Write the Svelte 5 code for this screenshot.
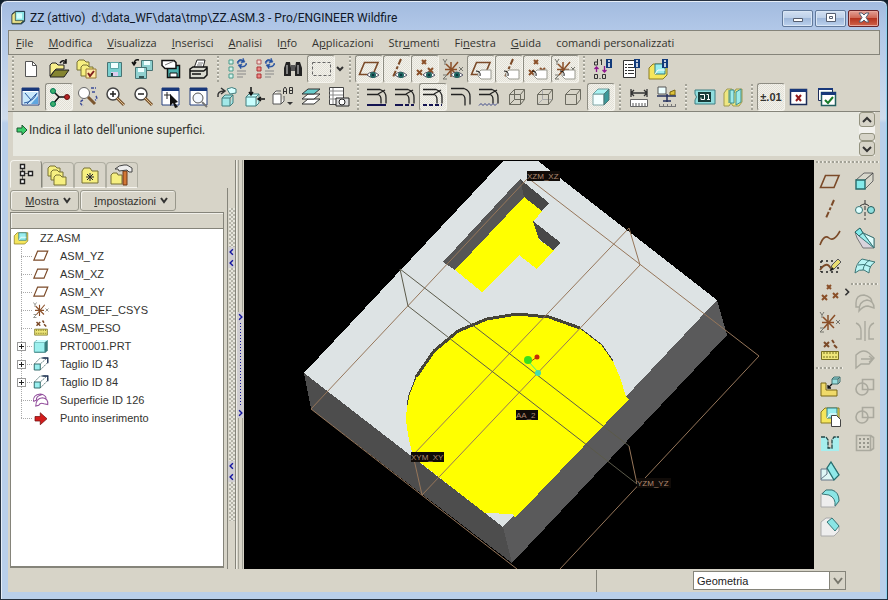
<script>
  // shared icon pieces, all on a 24x24 grid
  const eye = '<path d="M10 18q5-6 12 0q-6 5-12 0z" fill="#fff" stroke="#556" /><circle cx="16" cy="18" r="3" fill="#1f6660"/><path d="M16 17v2" stroke="#002"/>';
  const tag = '<path d="M12 13h10v9H12l-3-3v-3z" fill="#fff" stroke="#99998f"/><path d="M7 14q5 0 4 5" fill="none" stroke="#111"/>';
  const plane = '<path d="M7.500 5.500H21L16 17.500H2.500z" fill="none" stroke="#7b4a28" stroke-width="1.600"/>';
  const axis = '<path d="M16 2L8 20" stroke="#7b4a28" stroke-width="2" stroke-dasharray="6 2 3 2"/>';
  const points = '<path d="M9 3l4 4m0-4l-4 4M4 13l5 5m0-5l-5 5M15 11l5 5m0-5l-5 5" stroke="#8a4f28" stroke-width="2"/>';
  const csys = '<path d="M2 2l2 3l2-3M4 5v3M18 10l4 4m0-4l-4 4M2 18h4l-4 4h4" fill="none" stroke="#74746c"/><path d="M10 5v15M5 7l11 11M17 5L6 18M4 12.500h12" stroke="#8a4f28" stroke-width="1.500"/>';
  const info = '<path d="M15 2h6v9h-6z" fill="#123a7a"/><path d="M18 3v2M18 6v4" stroke="#fff" stroke-width="1.500"/>';
  const magnifier = '<circle cx="10" cy="9" r="6" fill="#fff" stroke="#444" stroke-width="1.500"/><path d="M14 13l7 7" stroke="#7b5630" stroke-width="3"/><path d="M14 13l7 7" stroke="#e0c090"/>';
  const cube = '<path d="M4 9h11v11H4z" fill="#f4ffff" stroke="#7fa5a5"/><path d="M4 9l5-5h11l-5 5z" fill="#a9f3f3" stroke="#6f9c9c"/><path d="M15 9l5-5v11l-5 5z" fill="#3a9a9a" stroke="#4f7777"/>';
  const edges = '<path d="M2 4.500h13q6 2 6 8v6M2 9.500h11q3 1 3 5v4M13 9l7-4" fill="none" stroke="#222" stroke-width="1.300"/>';
  const part = '<path d="M3 9l4-4h14v11l-4 4H3z" fill="#f5e65c" stroke="#8b7d23"/><path d="M9 5h10v10H9z" fill="#99eeee" stroke="#337b80"/><path d="M9 15l3-4h7" fill="none" stroke="#fff"/>';
  const folder = '<path d="M2 5l2-2h5l2 2h3v8H2z" fill="#f6ef80" stroke="#777135"/>';
  const disk = '<path d="M4.500 5.500h14v14h-14z" fill="#79cfcf" stroke="#487373"/><path d="M7.500 5.500h8v6h-8z" fill="#f1ffff" stroke="#5aa5a5"/><path d="M8 15h7v4H8z" fill="#dce"/><path d="M9 16v3" stroke="#244" stroke-width="2"/>';
  const refresh = '<path d="M12 5q2-4 6-2v-2l2 4-4 1 1-2q-3-1-4 3zM22 7q-2 4-6 3v2l-3-4 4-1-1 2q4 1 5-3z" fill="#2450a0" stroke="#2450a0" stroke-width=".5"/>';
  const frame = '<path d="M3 3h17v17H3z" fill="#fff" stroke="#26417e"/><path d="M3 3h17v3H3z" fill="#18387a"/>';
  const smallCut = '<path d="M3 12h8v8H3z" fill="#9aefef" stroke="#2f6969" stroke-width="1.300"/>';

  const icons = {
    app: '<path d="M3 6l5-4h14v15l-5 4H3z" fill="#244e56" stroke="#123"/><path d="M8 3h13v13H8z" fill="#8de4e4"/><path d="M3 7l5-4v13h12l-4 4H3z" fill="#ece48c" stroke="#3f4a30"/><path d="M10 5h8v8h-8z" fill="#d4ffff"/>',
    newFile: '<path d="M6.500 4.500h7l4 4v11h-11z" fill="#fff" stroke="#555"/><path d="M13.500 4.500v4h4" fill="none" stroke="#555"/>',
    open: '<path d="M3 19V8l2-2h4l2 2h6v4H9z" fill="#f8ef8c" stroke="#222"/><path d="M3 20l5-7h14l-5 7z" fill="#858530" stroke="#222"/><path d="M13 6q3-4 6-1m0-3v4h-3" fill="none" stroke="#111" stroke-width="1.500"/>',
    workDir: folder + '<path d="M6 10l2-2h4l2 2h4v9H6z" fill="#f6ef80" stroke="#777135"/><path d="M11 12h10v9H11z" fill="#ffe9a5" stroke="#967831"/><path d="M13 16l2 3l4-5" fill="none" stroke="#802020" stroke-width="2"/>',
    save: disk,
    saveCopy: '<path d="M10.500 3.500h11v10h-11z" fill="#8fd0cf" stroke="#487373"/><path d="M13 4h6v4h-6z" fill="#eff"/><path d="M4.500 10.500h11v11h-11z" fill="#8fd0cf" stroke="#487373"/><path d="M7 11h6v4H7z" fill="#eff"/><path d="M8 19h5v2H8z" fill="#355"/><path d="M8 3q-5-1-5 4m-2-2l2 3 2-3" fill="none" stroke="#111" stroke-width="1.500"/>',
    backup: '<path d="M8.500 8.500h12v12h-12z" fill="#4fb3b0" stroke="#111" stroke-width="1.500"/><path d="M11 16h7v4h-7z" fill="#fff" stroke="#111"/><path d="M3 3.500h12l2 2v6H6l-3-3z" fill="#fff" stroke="#111" stroke-width="1.500"/><path d="M6 8l9-4" stroke="#777"/>',
    print: '<path d="M7 11l3-8h8l-2 8" fill="#fff" stroke="#222"/><path d="M11 6h5M10 8h5" stroke="#777"/><path d="M3 12l3-2h14v8l-3 3H3z" fill="#d9d9cf" stroke="#111" stroke-width="1.500"/><path d="M3 14h14M17 14l3-3M5 17h9" stroke="#111" stroke-width="1.500"/>',
    regen: '<path d="M4 3h4v4H4zM4 10h4v4H4zM4 17h4v4H4z" fill="#d5f3ee" stroke="#4a9a8a"/><path d="M12 14h9M12 17h9M12 20h6" stroke="#888"/>' + refresh,
    regenList: '<path d="M4 3h4v4H4z" fill="#f6d9d5" stroke="#b05a5a"/><path d="M4 10h4v4H4zM4 17h4v4H4z" fill="#e88" stroke="#a33"/><path d="M12 14h9M12 17h9M12 20h6" stroke="#888"/>' + refresh,
    find: '<path d="M5 5h4l1 6v8H3v-8zM15 5h4l2 6v8h-7v-8z" fill="#222"/><path d="M10 8h4v6h-4z" fill="#555"/><path d="M6 8v9M17 8v9" stroke="#ddd"/>',
    selectBox: '<path d="M3.500 5.500h18v13h-18z" fill="none" stroke="#666" stroke-dasharray="3 2"/>',
    planeOn: plane + eye,
    axisOn: axis + eye,
    pointsOn: points + eye,
    csysOn: csys + eye,
    planeTag: plane + tag,
    axisTag: axis + tag,
    pointsTag: points + tag,
    csysTag: csys + tag,
    dims: '<path d="M6.500 2v6H3.500V5h3M9 3.500l1.500-1V8" fill="none" stroke="#333"/><path d="M5.500 15v-5m-2 2l2-2 2 2M13.500 9v6m-2-2l2 2 2-2" fill="none" stroke="#90158f" stroke-width="1.300"/><path d="M3.500 17.500h3v4h-3zM11.500 17.500h3v4h-3z" fill="none" stroke="#333"/><path d="M8.500 21.500h1" stroke="#333"/>' + info,
    report: '<path d="M4.500 3.500h12v17h-12z" fill="#fff" stroke="#333"/><path d="M6 7.500h2M6 10.500h2M6 13.500h2M6 16.500h2M9 7.500h5M9 10.500h6M9 13.500h6M9 16.500h6" stroke="#333"/>' + info,
    partInfo: '<g transform="translate(-1 2)">' + part + '</g>' + info,
    repaint: frame + '<path d="M4 7h15v12H4z" fill="#c9e8fb"/><path d="M5 18q9-1 13-10M6 8l6 7m-4 4l9-10" fill="none" stroke="#2859a0"/><path d="M12 19h7v-8z" fill="#5fa6df"/>',
    spin: '<path d="M6 6l6 6h8M12 12l-6 7" fill="none" stroke="#111" stroke-width="1.500"/><circle cx="6" cy="6" r="2.500" fill="#3cb06c" stroke="#075"/><circle cx="6" cy="19" r="2.500" fill="#3cb06c" stroke="#075"/><circle cx="20" cy="12" r="2.500" fill="#b72222" stroke="#611"/>',
    orientMode: '<circle cx="9" cy="8" r="5.500" fill="#fff" stroke="#666"/><path d="M13 12l7 7" stroke="#7b5630" stroke-width="3"/><path d="M16 3h5M17 7h4M8 15q-5 2 0 6M21 11q2 3-1 4" fill="none" stroke="#3c4c98" stroke-width="1.500" stroke-dasharray="3 1"/>',
    zoomIn: magnifier + '<path d="M7 9h6M10 6v6" stroke="#222" stroke-width="1.500"/>',
    zoomOut: magnifier + '<path d="M7 9h6" stroke="#222" stroke-width="1.500"/>',
    refit: frame + '<path d="M8 7v7M5 10h7" stroke="#222"/><path d="M11 9l8 8-3 1 3 4-3 1-2-5-3 3z" fill="#111"/>',
    reorient: frame + '<circle cx="11" cy="13" r="5" fill="#f4f8ff" stroke="#555"/><path d="M15 17l5 5" stroke="#777" stroke-width="2"/>',
    viewList: '<path d="M3 12q-1-6 6-6m-3-3l4 3-4 3" fill="none" stroke="#333" stroke-width="1.500"/><path d="M7 13h8v8H7zM7 13l3-3h8l-3 3M15 21l3-3v-8" fill="#a2e8e8" stroke="#417c7c"/><path d="M12 4q5-3 9 0v4l-6 1z" fill="#d9ffff" stroke="#417c7c"/>',
    saved: '<path d="M3 12h10v9H3zM3 12l3-3h10l-3 3M13 21l3-3V9" fill="#c8ffff" stroke="#417c7c"/><path d="M8 2v7m-2-2l2 3 2-3M22 14h-6m2-2l-3 2 3 2" fill="none" stroke="#111" stroke-width="1.500"/>',
    named: '<path d="M2 9h8v10H2zM2 9l3-3h5M10 19l3-3v-5" fill="#fff" stroke="#555"/><path d="M12.500 9V4l1.500-2 1.500 2v5M12.500 6.500h3M18.500 2.500v6h3v-6h-3M18.500 5.500h3" fill="none" stroke="#333"/><path d="M16 17h6l-3 3z" fill="#333"/>',
    layers: '<path d="M3 19l6-5h12l-6 5z" fill="#fff" stroke="#333"/><path d="M3 14l6-5h12l-6 5z" fill="#fff" stroke="#333"/><path d="M3 9l6-5h12l-6 5z" fill="#68cccc" stroke="#333"/>',
    viewManager: '<path d="M2.500 2.500h14v17h-14z" fill="#fff" stroke="#444"/><path d="M2 6h14M2 10h14M2 14h14M6 3v16" stroke="#888"/><path d="M9 13h13v8H9z" fill="#ddd" stroke="#222"/><circle cx="15" cy="17" r="3" fill="#fff" stroke="#222"/>',
    edge1: edges + '<path d="M2 20h19" stroke="#141452" stroke-width="2"/>',
    edge2: edges + '<path d="M2 20h19" stroke="#141452" stroke-width="2" stroke-dasharray="8 2 4 2"/>',
    edge3: edges + '<path d="M2 20h19" stroke="#141452" stroke-width="2" stroke-dasharray="4 2"/>',
    edge4: '<path d="M2 3.500h13q6 2 6 8v8M2 9.500h11q3 1 3 5v6" fill="none" stroke="#222" stroke-width="1.300"/>',
    edge5: edges + '<path d="M2 20.500l2-2 2 2 2-2 2 2 2-2 2 2 2-2 2 2 2-2" fill="none" stroke="#3a4488"/>',
    wire: '<path d="M4.500 9.500h11v10h-11zM9.500 4.500h10v10h-10zM4.500 9.500l5-5M15.500 9.500l4-5M15.500 19.500l4-5M4.500 19.500l5-5" fill="none" stroke="#6c6b60"/>',
    hidden: '<path d="M9.500 4.500v10h10M4.500 19.500l5-5" fill="none" stroke="#aaa" /><path d="M4.500 9.500h11v10h-11zM4.500 9.500l5-5h10v10l-4 5M15.500 9.500l4-5" fill="none" stroke="#6c6b60"/>',
    noHidden: '<path d="M4.500 9.500h11v10h-11zM4.500 9.500l5-5h10v10l-4 5M15.500 9.500l4-5" fill="none" stroke="#6c6b60"/>',
    shaded: cube,
    distance: '<path d="M4 4v8M20 4v8M4 8h16M7 5L4 8l3 3M17 5l3 3-3 3" fill="none" stroke="#333" stroke-width="1.300"/><path d="M3.500 14.500h17v7h-17z" fill="#fff" stroke="#666"/><path d="M6 21v-3M9 21v-3M12 21v-3M15 21v-3M18 21v-3" stroke="#555"/>',
    mass: '<path d="M3 2h8v7H3z" fill="#eff" stroke="#555"/><path d="M15 7l5-2v5h-5z" fill="#ddc23a" stroke="#776410"/><path d="M2 11h19M12 9v8M8 16h8" stroke="#26315e" stroke-width="1.500"/><path d="M4.500 19v3M8.500 19v3M12.500 19v3M16.500 19v3M20.500 19v3M4 21.500h17" stroke="#777"/>',
    j1: '<path d="M2 5h20v14H2v-4q3-3 0-6z" fill="#91dede" stroke="#3f7f83"/><path d="M5 7h13v10H5z" fill="#173b39"/><path d="M7 9.500h4.500v5H8v-2M14 14.500h3M15.500 14.500v-5h-2" fill="none" stroke="#fff"/>',
    interfere: '<path d="M3 8l3-4h5l2 4 2-4h6v13l-3 4h-6l-2-3-2 3H3z" fill="#eee680" stroke="#a09a50"/><path d="M8 5v13M9 5h4v13H9zM15 7l5-3v13l-5 3z" fill="#9feaea" stroke="#3f8f8f"/>',
    closeWin: '<path d="M3.500 4.500h16v15h-16z" fill="#fff" stroke="#1c2c5a" stroke-width="1.500"/><path d="M3 4h17v3H3z" fill="#18387a"/><path d="M9 10l5 6m0-6l-5 6" stroke="#931b1b" stroke-width="2"/>',
    activeWin: '<path d="M3.500 3.500h14v12h-14z" fill="#fff" stroke="#1c2c5a"/><path d="M3 3h15v2H3z" fill="#18387a"/><path d="M6.500 7.500h14v13h-14z" fill="#fff" stroke="#226060" stroke-width="1.500"/><path d="M6 7h15v3H6z" fill="#18387a"/><path d="M10 15l3 3 5-6" fill="none" stroke="#187b28" stroke-width="2"/>',
    plane,
    axis,
    points,
    csys,
    part,
    treeTab: '<path d="M6.500 2.500h4v4h-4zM6.500 9.500h4v4h-4zM6.500 17.500h4v4h-4zM14.500 9.500h4v4h-4z" fill="#fff" stroke="#222" stroke-width="1.400"/><path d="M8.500 7v2M8.500 14v3M11 11.500h3" stroke="#555"/>',
    folders: folder + '<path d="M5 9l2-2h4l2 2h4v8H5z" fill="#f6ef80" stroke="#777135"/><path d="M8 14l2-2h4l2 2h4v8H8z" fill="#f6ef80" stroke="#777135"/>',
    favorites: '<path d="M4 8l2-3h6l2 3h6v12H4z" fill="#f6ef80" stroke="#777135"/><path d="M12 10v8M8 14h8M9 11l6 6M15 11l-6 6" stroke="#223"/>',
    hammer: '<path d="M1 12l2-2h4l1 2h4v9H1z" fill="#f6ef80" stroke="#777135"/><path d="M13 8h4v14h-4z" fill="#d27735" stroke="#713915"/><path d="M5 6q4-4 9-4h3l5 3v4h-3l-2-2-8 1-1-2z" fill="#eee" stroke="#444"/>',
    ruler: '<path d="M3.500 13.500h17v8h-17z" fill="#eee678" stroke="#777021"/><path d="M6 14v3M9 14v3M12 14v3M15 14v3M18 14v3M5 19h14" stroke="#777021" stroke-dasharray="2 1"/><path d="M6 4l5 5m0-5l-5 5" stroke="#7b4a28" stroke-width="2"/><path d="M14 2l2 3M16 7l3 3" stroke="#7b4a28" stroke-width="2"/>',
    solid: '<path d="M3 7l3-3h15v14l-3 3H3z" fill="#367b7b"/><path d="M3 7h14v13H3z" fill="#9cf0ee" stroke="#4b9999"/><path d="M3 7l4-3h14l-4 3z" fill="#c8ffff"/>',
    extrude: smallCut + '<path d="M3 12l8-8h10v6l-10 10M11 12l9-8" fill="none" stroke="#345b5b" stroke-dasharray="3 1"/><path d="M14 4h7v7" fill="none" stroke="#235" stroke-width="1.800"/>',
    surface: '<path d="M2 14q-1-9 9-10q7 1 8 6M2 14l4-2q-1-5 7-7M5 20q0-10 9-11q8 1 7 9l-5-1q-5-2-7 2z" fill="#fff" stroke="#93509d" stroke-width="1.400"/>',
    insert: '<path d="M4 10h7V5l9 8-9 8v-5H4z" fill="#d31c1c" stroke="#721010"/>',
    extrudeBig: '<path d="M3 10l8-7h9v8l-8 8" fill="#d8d7cc" stroke="#666"/><path d="M12 10l8-7" stroke="#444"/><path d="M3 10h9v9H3z" fill="#84eaea" stroke="#276868" stroke-width="1.400"/>',
    revolve: '<path d="M12 2v20" stroke="#333" stroke-dasharray="4 2"/><circle cx="6" cy="12" r="3.500" fill="#dff" stroke="#3c7676"/><circle cx="18" cy="12" r="3.500" fill="#8edfdf" stroke="#245a5a"/><path d="M7 8q5-4 9 0" fill="none" stroke="#333"/>',
    blend: '<path d="M2 6l5-4 3 5 11 5v10H10L4 12z" fill="#d9d4dc" stroke="#777"/><path d="M2 6l5-4 3 5-4 3z" fill="#84eaea" stroke="#276868"/><path d="M10 7l11 5v10z" fill="#dffcfc" stroke="#3c7676"/><path d="M6 10l4-3 11 15z" fill="#9eeeee" stroke="#3c7676"/>',
    sweep: '<path d="M2 19q1-10 7-14l13 3q-6 4-6 11l-5-3q-5-1-9 3z" fill="#b9f5f5" stroke="#3c7676"/><path d="M10 16q1-7 7-10M5 11q6-2 13 2" fill="none" stroke="#3c7676"/>',
    curve: '<path d="M2 19q4-11 9-7t11-7" fill="none" stroke="#7b4a28" stroke-width="1.600"/>',
    sketch: '<path d="M3 7h17M3 18h17M3 7v11M20 8v10" stroke="#222" stroke-dasharray="2 3" stroke-width="1.500"/><path d="M2 16q7-10 11-1" fill="none" stroke="#7b4a28" stroke-width="1.800"/><path d="M12 17l2-6 6-6 3 3-7 7z" fill="#e9dd72" stroke="#555"/><path d="M12 17l2-4 2 2z" fill="#111"/>',
    assemble: '<path d="M3 8h5v7h11v6H3z" fill="#f0da6a" stroke="#796617"/><path d="M14 9l-4 4m0-3v3h3" fill="none" stroke="#111" stroke-width="1.300"/><path d="M14 4h6v5h-6zM14 4l2-2h6l-2 2M20 9l2-2V2" fill="#98dede" stroke="#416e6e"/>',
    create: part + '<path d="M13.500 12.500h5l4 4v7h-9z" fill="#fff" stroke="#444"/>',
    hole: '<path d="M3 6h5l2 3v8h4V9l2-3h5v14H3z" fill="#a6eeee"/><path d="M3 6h5l2 3v8h4V9l2-3h5" fill="none" stroke="#244" stroke-width="1.300" stroke-dasharray="4 1"/>',
    shell: '<path d="M3 10h6l4-7 8 13-5 5H3z" fill="#dff6f6" stroke="#678"/><path d="M3 20l6-5V9" fill="none" stroke="#678"/><path d="M13 3l8 13-5 5-7-12z" fill="#8fe9e9" stroke="#287070" stroke-width="1.300"/>',
    round: '<path d="M3 7l5-4h6q7 2 7 11l-4 6H3z" fill="#eee" stroke="#aaa"/><path d="M8 3h6q7 2 7 11l-4 5q1-8-6-11l-7-1z" fill="#8ae5e5" stroke="#3a7777"/>',
    chamfer: '<path d="M3 7l5-4h6l7 8v5l-5 5H3z" fill="#eee" stroke="#aaa"/><path d="M14 3l7 8-4 5-8-9z" fill="#8ae5e5" stroke="#3a7777"/>',
    merge: '<path d="M3 12q0-8 8-8q8 2 8 7M6 20q0-10 8-11q7 1 7 8l-6-2q-5 0-9 5zM3 12v4h3" fill="none" stroke="#aaa99e" stroke-width="1.400"/>',
    trim: '<path d="M12 2v20M3 20h5V12q0-6-5-8M21 20h-5v-8q0-6 5-8" fill="none" stroke="#aaa99e" stroke-width="1.400"/>',
    extend: '<path d="M3 8q7-7 13-2l5 5-5 6H8l-5 4zM8 12h11m-3-3l4 3-4 3" fill="none" stroke="#aaa99e" stroke-width="1.400"/>',
    circleBox: '<circle cx="9" cy="14" r="6" fill="none" stroke="#aaa99e" stroke-width="1.600"/><path d="M9.500 4.500h11v10h-11z" fill="none" stroke="#aaa99e" stroke-width="1.600"/>',
    pattern: '<path d="M3.500 4.500h14v15h-14zM17.500 4.500l3 2v11l-3 2" fill="none" stroke="#aaa99e" stroke-width="1.600"/><path d="M6 8h10M6 12h10M6 16h10" stroke="#98978d" stroke-width="2" stroke-dasharray="2 2"/>'
  };

  // [before, mnemonic, after]
  const menus = [
    ['', 'F', 'ile'],
    ['', 'M', 'odifica'],
    ['', 'V', 'isualizza'],
    ['', 'I', 'nserisci'],
    ['', 'A', 'nalisi'],
    ['I', 'n', 'fo'],
    ['A', 'p', 'plicazioni'],
    ['Str', 'u', 'menti'],
    ['Fi', 'n', 'estra'],
    ['', 'G', 'uida'],
    ['comandi personalizzati', '', '']
  ];

  const topRow = [
    ['newFile', 'open', 'workDir', 'save', 'saveCopy', 'backup', 'print'],
    ['regen', 'regenList', 'find', 'selectBox'],
    ['planeOn', 'axisOn', 'pointsOn', 'csysOn', 'planeTag', 'axisTag', 'pointsTag', 'csysTag'],
    ['dims', 'report', 'partInfo']
  ];

  const bottomRow = [
    ['repaint', 'spin', 'orientMode', 'zoomIn', 'zoomOut', 'refit', 'reorient', 'viewList', 'saved', 'named', 'layers', 'viewManager'],
    ['edge1', 'edge2', 'edge3', 'edge4', 'edge5', 'wire', 'hidden', 'noHidden', 'shaded'],
    ['distance', 'mass'],
    ['j1', 'interfere'],
    ['tolerance', 'closeWin', 'activeWin']
  ];

  let pressed = $state({
    selectBox: true,
    planeOn: true,
    axisOn: true,
    pointsOn: true,
    planeTag: true,
    axisTag: true,
    pointsTag: true,
    csysTag: true,
    spin: true,
    edge3: true,
    shaded: true,
    tolerance: true
  });

  const tabs = ['treeTab', 'folders', 'favorites', 'hammer'];
  let activeTab = $state('treeTab');

  const tree = [
    { icon: 'plane', label: 'ASM_YZ' },
    { icon: 'plane', label: 'ASM_XZ' },
    { icon: 'plane', label: 'ASM_XY' },
    { icon: 'csys', label: 'ASM_DEF_CSYS' },
    { icon: 'ruler', label: 'ASM_PESO' },
    { icon: 'solid', label: 'PRT0001.PRT', open: true },
    { icon: 'extrude', label: 'Taglio ID 43', open: true },
    { icon: 'extrude', label: 'Taglio ID 84', open: true },
    { icon: 'surface', label: 'Superficie ID 126' },
    { icon: 'insert', label: 'Punto inserimento' }
  ];

  const datumTools = ['plane', 'axis', 'curve', 'sketch', 'points', 'csys', 'ruler'];
  const asmTools = ['assemble', 'create', 'hole', 'shell', 'round', 'chamfer'];
  const shapeTools = ['extrudeBig', 'revolve', 'blend', 'sweep'];
  const editTools = ['merge', 'trim', 'extend', 'circleBox', 'circleBox', 'pattern'];

  const labels = [
    { text: 'XZM_XZ', x: 527, y: 171, w: 33 },
    { text: 'AA_2', x: 516, y: 410, w: 22 },
    { text: 'XYM_XY', x: 411, y: 452, w: 33 },
    { text: 'YZM_YZ', x: 637, y: 478, w: 34 }
  ];

  let filter = $state('Geometria');
</script>

{#snippet icon(name)}
  <svg class="icon" viewBox="0 0 24 24" aria-hidden="true">{@html icons[name]}</svg>
{/snippet}

{#snippet chevron(d)}
  <svg class="chevron" viewBox="0 0 10 10" aria-hidden="true"><path {d} /></svg>
{/snippet}

{#snippet tool(name)}
  <button class="tool" class:pressed={pressed[name]} aria-label={name} onclick={() => (pressed[name] = !pressed[name])}>
    {#if name === 'tolerance'}
      <span class="tolerance">±.01</span>
    {:else}
      {@render icon(name)}
    {/if}
  </button>
{/snippet}

<div class="window">
  <header class="titlebar">
    <span class="app-icon">{@render icon('app')}</span>
    <h1>ZZ (attivo)&nbsp; d:\data_WF\data\tmp\ZZ.ASM.3 - Pro/ENGINEER Wildfire</h1>
    <div class="controls">
      <button aria-label="Riduci"><svg viewBox="0 0 14 12"><path d="M2.500 6.500h9v3h-9z" /></svg></button>
      <button aria-label="Ingrandisci"><svg viewBox="0 0 14 12"><path d="M2.500 1.500h9v8h-9zM5.500 4.500h3v2h-3z" /></svg></button>
      <button class="close" aria-label="Chiudi"><svg viewBox="0 0 14 12"><path d="M2 1h3l2 2 2-2h3L9 5.500 12 10H9L7 8l-2 2H2l3-4.500z" /></svg></button>
    </div>
  </header>

  <div class="client">
    <nav class="menubar">
      {#each menus as [before, key, after]}
        <button>{before}<u>{key}</u>{after}</button>
      {/each}
    </nav>

    <div class="toolbars">
      {#each [topRow, bottomRow] as row}
        <div class="toolbar">
          {#each row as group}
            <span class="grip"></span>
            {#each group as name}
              {@render tool(name)}
            {/each}
            {#if group.includes('selectBox')}
              <button class="more" aria-label="Altro">{@render chevron('M2 3l3 3 3-3')}</button>
            {/if}
          {/each}
        </div>
      {/each}
    </div>

    <div class="message">
      <svg class="arrow" viewBox="0 0 12 12"><path d="M1 4h5V1l5 5-5 5V8H1z" /></svg>
      <p>Indica il lato dell'unione superfici.</p>
      <div class="scroller">
        <button aria-label="Su">{@render chevron('M1 7l4-4 4 4')}</button>
        <span class="thumb"></span>
        <button aria-label="Giù">{@render chevron('M1 3l4 4 4-4')}</button>
      </div>
    </div>

    <main class="workspace">
      <aside class="navigator">
        <div class="tabs">
          {#each tabs as name}
            <button class:active={activeTab === name} aria-label={name} onclick={() => (activeTab = name)}>
              {@render icon(name)}
            </button>
          {/each}
        </div>
        <div class="tab-body">
          <div class="tree-menus">
            <button class="show"><span><u>M</u>ostra</span>{@render chevron('M2 2l3 4 3-4')}</button>
            <button class="settings"><span><u>I</u>mpostazioni</span>{@render chevron('M2 2l3 4 3-4')}</button>
          </div>
          <div class="tree-header"></div>
          <div class="tree">
            <div class="root">{@render icon('part')}<span>ZZ.ASM</span></div>
            <ul>
              {#each tree as item}
                <li>
                  <span class="branch">
                    {#if item.open}<button class="expand" aria-label="Espandi {item.label}"></button>{/if}
                  </span>
                  {@render icon(item.icon)}
                  <span>{item.label}</span>
                </li>
              {/each}
            </ul>
          </div>
        </div>
      </aside>

      <div class="splitter left">
        <span class="dots"></span>
        <button aria-label="Comprimi">{@render chevron('M7 1L3 5l4 4')}{@render chevron('M7 1L3 5l4 4')}</button>
        <span class="dots tall"></span>
        <button aria-label="Comprimi">{@render chevron('M7 1L3 5l4 4')}{@render chevron('M7 1L3 5l4 4')}</button>
        <span class="dots"></span>
      </div>
      <div class="splitter right">
        <button aria-label="Espandi">{@render chevron('M3 1l4 4-4 4')}<i></i>{@render chevron('M3 1l4 4-4 4')}</button>
      </div>

      <svg class="viewport" viewBox="244 160 570 409" preserveAspectRatio="xMidYMid slice" role="img" aria-label="Modello ZZ.ASM">
        <g shape-rendering="crispEdges">
          <!-- block -->
          <path fill="#dde3e4" d="M503 161H538L717 300 503 527 304 373z" />
          <path fill="#4d4d4d" d="M304 373L503 527 512 563 311 409z" />
          <path fill="#5a5a5b" d="M503 527L717 300 727 335 512 563z" />
          <!-- slot -->
          <path fill="#565656" d="M443 262L520 179 526 198 455 270z" />
          <path fill="#484848" d="M520 179L549 203 542 211 524 197z" />
          <path fill="#ff0" d="M524 197L542 211 534 221 539 240 554 250 537 269 519 255 482 292 455 270z" />
          <path fill="#484848" d="M533 221L561 243 553 250 539 239z" />
          <!-- round pocket -->
          <path fill="#ff0" d="M407 405L409 395 415 378 434 350 458 331 487 319 517 314 550 317 580 328 602 345 613 361 621 380 626 397 629 399 515 518 513 514 485 513 413 457 408 435 406 420z" />
          <path class="rim" d="M416 377L434 351 458 331 487 319 517 314 549 317 580 328" />
          <path class="rim thin" d="M407 405L409 395 416 377M580 328L602 345 613 361" />
        </g>
        <g class="datum">
          <path d="M517 569L311 409 528 178 759 356 560 569" />
          <path d="M629 228L640 265 422 495 413 455z" />
          <path class="dark" d="M629 446L400 269 408 306 637 484" />
          <path d="M629 446L637 484" />
        </g>
        <g class="spin-center">
          <path stroke="#3df08a" d="M528 361L538 372" />
          <path stroke="#b0420c" d="M530 362L537 357" />
          <circle cx="528" cy="360" r="4" fill="#38e01c" />
          <circle cx="537" cy="357" r="2.500" fill="#c72a08" />
          <circle cx="538" cy="373" r="3" fill="#42dcb0" />
        </g>
        {#each labels as l}
          <rect x={l.x} y={l.y} width={l.w} height="10" />
          <text x={l.x} y={l.y + 8}>{l.text}</text>
        {/each}
      </svg>

      <aside class="features">
        <span class="grip-h"></span>
        <div class="columns">
          <div class="column">
            {#each datumTools as name}
              {@render tool(name)}
            {/each}
            <span class="grip-h"></span>
            {#each asmTools as name}
              {@render tool(name)}
            {/each}
          </div>
          <button class="flyout" aria-label="Altri punti">{@render chevron('M3 1l4 4-4 4')}</button>
          <div class="column">
            {#each shapeTools as name}
              {@render tool(name)}
            {/each}
            <span class="grip-h"></span>
            {#each editTools as name}
              <button class="tool" disabled aria-label={name}>{@render icon(name)}</button>
            {/each}
          </div>
        </div>
      </aside>
    </main>

    <footer class="status">
      <div class="status-text"></div>
      <label class="filter">
        <select bind:value={filter} aria-label="Filtro di selezione">
          <option>Geometria</option>
          <option>Feature</option>
          <option>Quote</option>
        </select>
        <span class="drop">{@render chevron('M1 2l4 5 4-5')}</span>
      </label>
    </footer>
  </div>
</div>

<style>
  :global(body) {
    margin: 0;
    background: #10202c;
  }

  .window {
    --face: #d7d4c8;
    --line: #85847a;
    display: flex;
    flex-direction: column;
    box-sizing: border-box;
    min-height: 100vh;
    padding: 0 7px 7px;
    border: 1px solid #26313f;
    border-radius: 7px 7px 0 0;
    background: linear-gradient(#a2bbdf, #b2c8e8 30px, #cfdcec 118px, #b9cfea 122px);
    box-shadow: inset 0 1px #e6eef8, inset 1px 0 #e6eef8, inset -1px 0 #8fd0ee;
    font-family: 'Open Sans', 'Noto Sans', sans-serif;
    font-size: 11px;
    color: #33332f;
  }

  button {
    margin: 0;
    padding: 0;
    border: 0;
    background: none;
    color: inherit;
    font: inherit;
  }

  .icon {
    display: block;
    flex: none;
    width: 24px;
    height: 24px;
    overflow: visible;
  }

  .chevron {
    flex: none;
    width: 10px;
    height: 10px;
    fill: none;
    stroke: #333;
    stroke-width: 2;
  }

  /* title bar */
  .titlebar {
    display: flex;
    align-items: center;
    height: 29px;
    padding: 5px 1px 0 2px;
    box-sizing: border-box;
  }

  .app-icon .icon {
    width: 16px;
    height: 16px;
  }

  .titlebar h1 {
    flex: 1;
    margin: 0 0 0 4px;
    font: 400 12px/16px Roboto, 'Open Sans', sans-serif;
    color: #101828;
    white-space: nowrap;
  }

  .controls {
    display: flex;
    gap: 2px;
  }

  .controls button {
    display: flex;
    align-items: center;
    justify-content: center;
    width: 31px;
    height: 17px;
    box-sizing: border-box;
    border: 1px solid #61799b;
    border-radius: 2px;
    background: linear-gradient(#d2e0f2, #bccfe8 48%, #9fb8da 50%, #bcd2ee);
    box-shadow: inset 0 0 0 1px #d9e6f5;
  }

  .controls svg {
    width: 14px;
    height: 12px;
    fill: #fff;
    stroke: #555e70;
  }

  .controls .close {
    border-color: #68252a;
    background: linear-gradient(#e3a095, #cf6552 48%, #b5341f 50%, #d0644a);
    box-shadow: inset 0 0 0 1px #e9a79b;
  }

  /* client area */
  .client {
    display: flex;
    flex: 1;
    flex-direction: column;
    background: var(--face);
  }

  .menubar {
    display: flex;
    gap: 15px;
    height: 25px;
    padding-left: 7px;
    box-sizing: border-box;
    border: 1px solid var(--line);
    white-space: nowrap;
  }

  .toolbars {
    height: 57px;
    box-sizing: border-box;
    border-bottom: 1px solid var(--line);
  }

  .toolbar {
    display: flex;
    height: 28px;
  }

  .tool {
    display: flex;
    align-items: center;
    justify-content: center;
    flex: none;
    width: 28px;
    height: 28px;
    box-sizing: border-box;
    border: 1px solid transparent;
    border-radius: 3px;
  }

  .pressed {
    border-color: #8e8d83 #f4f3ec #f4f3ec #8e8d83;
    background: repeating-conic-gradient(#f3f2ec 0 25%, #e2e0d6 0 50%) 0 0 / 2px 2px;
  }

  .tolerance {
    font: bold 11px 'Liberation Sans Narrow', 'Liberation Sans', sans-serif;
  }

  .more {
    display: flex;
    align-items: center;
    width: 10px;
  }

  .grip {
    flex: none;
    width: 10px;
    margin: 1px 0;
    background: repeating-linear-gradient(#a3a297 0 2px, #f1f0e9 2px 3px, transparent 3px 4px) 4px 0 / 2px 100% no-repeat;
  }

  .grip:first-child {
    width: 9px;
  }

  .grip-h {
    flex: none;
    height: 3px;
    background: repeating-linear-gradient(90deg, #a3a297 0 2px, #f1f0e9 2px 3px, transparent 3px 4px) 0 0 / 100% 2px no-repeat;
  }

  /* message area */
  .message {
    display: flex;
    height: 44px;
    margin: 0 5px;
    background: #e7e8e0;
  }

  .arrow {
    width: 12px;
    height: 12px;
    margin: 12px 1px 0 3px;
    fill: #3ccf6c;
    stroke: #1d5a30;
  }

  .message p {
    flex: 1;
    margin: 10px 0 0;
    font: 12px/16px Roboto, 'Open Sans', sans-serif;
  }

  .scroller {
    display: flex;
    flex-direction: column;
    justify-content: space-between;
    width: 16px;
    background: #f3f2ee;
  }

  .scroller button,
  .thumb {
    display: flex;
    align-items: center;
    justify-content: center;
    height: 15px;
    box-sizing: border-box;
    border: 1px solid #93927f;
    border-radius: 3px;
    background: var(--face);
  }

  .thumb {
    height: 8px;
    margin-top: 5px;
  }

  /* workspace */
  .workspace {
    display: flex;
    flex: 1;
    margin-top: 4px;
  }

  .navigator {
    display: flex;
    flex-direction: column;
    width: 220px;
    box-sizing: border-box;
    padding-left: 2px;
  }

  .tabs {
    display: flex;
    height: 28px;
  }

  .tabs button {
    display: flex;
    align-items: center;
    justify-content: center;
    width: 32px;
    margin-top: 2px;
    box-sizing: border-box;
    border: 1px solid #b0afa3;
    border-bottom-color: #f5f4ee;
    border-radius: 4px 4px 0 0;
  }

  .tabs button.active {
    margin-top: 0;
    border-color: #f5f4ee #85847a transparent #f5f4ee;
  }

  .tab-body {
    display: flex;
    flex: 1;
    flex-direction: column;
    padding: 2px 3px 1px 0;
    border-right: 1px solid var(--line);
  }

  .tree-menus {
    display: flex;
    gap: 1px;
    height: 21px;
    margin-bottom: 1px;
  }

  .tree-menus button {
    display: flex;
    align-items: center;
    justify-content: flex-end;
    gap: 3px;
    width: 69px;
    padding-right: 6px;
    box-sizing: border-box;
    border: 1px solid #98978b;
    border-radius: 3px;
    font-family: 'Liberation Sans', Arial, sans-serif;
    box-shadow: inset 1px 1px #f1f0ea;
  }

  .tree-menus .settings {
    width: 96px;
  }

  .tree-header {
    height: 15px;
    border: 1px solid var(--line);
    border-bottom: 0;
    box-shadow: inset 1px 1px #f1f0ea;
  }

  .tree {
    flex: 1;
    border: 1px solid var(--line);
    border-bottom-width: 2px;
    background: #fff;
    font: 11px/18px 'Liberation Sans', Arial, sans-serif;
    white-space: nowrap;
  }

  .root,
  .tree li {
    display: flex;
    align-items: center;
    height: 18px;
  }

  .tree .icon {
    width: 18px;
    height: 18px;
  }

  .root {
    gap: 10px;
    padding-left: 1px;
  }

  .tree ul {
    margin: 0;
    padding: 0 0 0 10px;
    list-style: none;
  }

  .tree li .icon {
    margin-right: 10px;
  }

  .branch {
    display: flex;
    align-items: center;
    width: 11px;
    height: 18px;
    background:
      repeating-linear-gradient(90deg, #aaa 0 1px, transparent 1px 2px) 0 9px / 11px 1px no-repeat,
      repeating-linear-gradient(#aaa 0 1px, transparent 1px 2px) 0 0 / 1px 100% no-repeat;
  }

  .tree li:last-child .branch {
    background-size: 11px 1px, 1px 9px;
  }

  .expand {
    flex: none;
    width: 9px;
    height: 9px;
    margin-left: -4px;
    box-sizing: border-box;
    border: 1px solid #999;
    background:
      linear-gradient(#222, #222) center / 5px 1px no-repeat,
      linear-gradient(#222, #222) center / 1px 5px no-repeat,
      #fff;
  }

  .splitter {
    display: flex;
    flex-direction: column;
    align-items: center;
    width: 8px;
    box-sizing: border-box;
  }

  .splitter.left {
    width: 7px;
    padding: 48px 0;
  }

  .splitter.right {
    width: 9px;
    padding-top: 152px;
    border-left: 1px solid var(--line);
    background: linear-gradient(90deg, #eeede5 1px, transparent 1px 2px, #a3a297 2px 3px, transparent 3px 6px, #a3a297 6px 7px, transparent 7px);
  }

  .splitter button {
    display: flex;
    flex-direction: column;
    gap: 1px;
    background: #cfcdd0;
  }

  .splitter .chevron {
    width: 7px;
    stroke: #1515a0;
  }

  .splitter i {
    width: 1px;
    height: 84px;
    margin: 0 auto;
    background: repeating-linear-gradient(#1515a0 0 1px, transparent 1px 3px);
  }

  .dots {
    flex: 1;
    width: 6px;
    background: repeating-conic-gradient(#b5b4a9 0 25%, #e6e5dc 0 50%) 0 0 / 4px 4px;
  }

  .dots.tall {
    flex: 5;
  }

  .viewport {
    display: block;
    flex: 1;
    min-width: 0;
    height: auto;
    background: #000;
  }

  .rim {
    fill: none;
    stroke: #45433a;
    stroke-width: 3;
  }

  .rim.thin {
    stroke-width: 1;
  }

  .datum path {
    fill: none;
    stroke: #96765a;
  }

  .datum .dark {
    stroke: #5b5a4a;
  }

  .viewport rect {
    fill: #100b08;
  }

  .viewport text {
    fill: #b08a70;
    font: 8px 'Liberation Sans', Arial, sans-serif;
  }

  /* right toolbars */
  .features {
    width: 66px;
    box-sizing: border-box;
    padding: 1px 1px 0 2px;
  }

  .features > .grip-h {
    display: block;
    margin-bottom: 4px;
  }

  .columns {
    display: flex;
    align-items: flex-start;
  }

  .column {
    display: flex;
    flex-direction: column;
    width: 27px;
  }

  .column .grip-h {
    margin: 3px 0;
  }

  .flyout {
    width: 8px;
    margin-top: 116px;
  }

  .flyout .chevron {
    width: 8px;
    height: 8px;
  }

  /* status bar */
  .status {
    display: flex;
    justify-content: flex-end;
    height: 23px;
  }

  .status-text {
    width: 96px;
    margin-top: 1px;
    border-left: 1px solid var(--line);
  }

  .filter {
    display: flex;
    width: 153px;
    height: 19px;
    margin: 2px 34px 0 0;
    box-sizing: border-box;
    border: 1px solid var(--line);
  }

  .filter select {
    flex: 1;
    padding: 0 3px;
    appearance: none;
    border: 0;
    border-radius: 0;
    background: #fff;
    color: #222;
    font: 11px 'Liberation Sans', Arial, sans-serif;
  }

  .drop {
    display: flex;
    align-items: center;
    justify-content: center;
    width: 15px;
    border-left: 1px solid var(--line);
    pointer-events: none;
  }

  .drop .chevron {
    stroke: #77766c;
  }
</style>
